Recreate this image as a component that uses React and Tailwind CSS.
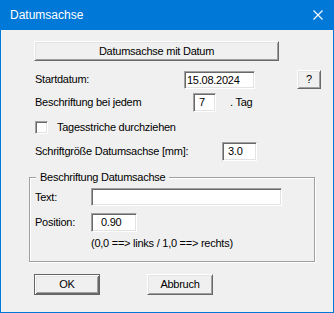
import React from 'react';

const font = { fontFamily: '"Liberation Sans", Arial, sans-serif' };

const Field = ({ w, h = 19, pl = 3, children }) => (
  <div
    className={`bg-white border border-t-[#a0a0a0] border-l-[#a0a0a0] border-b-white border-r-white shadow-[inset_1px_1px_0_#696969,inset_-1px_-1px_0_#e3e3e3] flex items-center text-black shrink-0`}
    style={{ width: w, height: h, paddingLeft: pl }}
  >
    {children}
  </div>
);

const Btn = ({ w, h, def, children }) => (
  <div
    className={`bg-[#f0f0f0] flex items-center justify-center shrink-0 text-black ${
      def
        ? 'border border-[#646464] shadow-[inset_1px_1px_0_#ffffff,inset_-1px_-1px_0_#696969,inset_2px_2px_0_#e3e3e3,inset_-2px_-2px_0_#a0a0a0]'
        : 'border border-t-white border-l-white border-b-[#696969] border-r-[#696969] shadow-[inset_1px_1px_0_#e3e3e3,inset_-1px_-1px_0_#a0a0a0]'
    }`}
    style={{ width: w, height: h }}
  >
    {children}
  </div>
);

const App = () => {
  return (
    <div className="w-[334px] h-[313px] bg-[#0078d7] flex flex-col text-[11px] tracking-[-0.25px]" style={font}>
      <div className="h-[30px] flex items-center justify-between pl-[10px] pr-[11px] shrink-0">
        <span className="text-white text-[12px] tracking-normal">Datumsachse</span>
        <svg width="10" height="10" viewBox="0 0 10 10">
          <path d="M0.5 0.5 L9.5 9.5 M9.5 0.5 L0.5 9.5" stroke="white" strokeWidth="1.1" />
        </svg>
      </div>
      <div className="flex-1 mx-[1px] mb-[1px] bg-[#f0f0f0] flex flex-col leading-[13px]">
        <div className="mt-[11px] ml-[33px]">
          <Btn w={245} h={20}>Datumsachse mit Datum</Btn>
        </div>

        <div className="mt-[9px] ml-[34px] h-[19px] flex items-center">
          <span className="w-[149px] shrink-0">Startdatum:</span>
          <div className="self-start mt-[1px]">
            <Field w={71} h={18} pl={2}>15.08.2024</Field>
          </div>
          <div className="ml-[42px]">
            <Btn w={24} h={19}>?</Btn>
          </div>
        </div>

        <div className="mt-[4px] ml-[34px] h-[19px] flex items-center">
          <span className="w-[158px] shrink-0">Beschriftung bei jedem</span>
          <Field w={23} pl={5}>7</Field>
          <span className="ml-[14px]">. Tag</span>
        </div>

        <div className="mt-[9px] ml-[34px] h-[13px] flex items-center">
          <div className="w-[13px] h-[13px] bg-white border border-t-[#a0a0a0] border-l-[#a0a0a0] border-b-white border-r-white shadow-[inset_1px_1px_0_#696969,inset_-1px_-1px_0_#e3e3e3]" />
          <span className="ml-[9px]">Tagesstriche durchziehen</span>
        </div>

        <div className="mt-[8px] ml-[34px] h-[19px] flex items-center">
          <span className="w-[187px] shrink-0">Schriftgröße Datumsachse [mm]:</span>
          <Field w={35} pl={5}>3.0</Field>
        </div>

        <div className="mt-[16px] ml-[28px] w-[286px] h-[85px] relative border border-[#a0a0a0] shadow-[inset_1px_1px_0_#ffffff,1px_1px_0_#ffffff] flex flex-col">
          <span className="absolute -top-[7px] left-[6px] px-[4px] bg-[#f0f0f0]">Beschriftung Datumsachse</span>
          <div className="mt-[10px] ml-[5px] h-[18px] flex items-center">
            <span className="w-[56px] shrink-0">Text:</span>
            <Field w={191} h={18} />
          </div>
          <div className="mt-[7px] ml-[5px] h-[19px] flex items-center">
            <span className="w-[56px] shrink-0">Position:</span>
            <Field w={46} pl={9}>0.90</Field>
          </div>
          <div className="mt-[5px] ml-[61px]">(0,0 ==&gt; links / 1,0 ==&gt; rechts)</div>
        </div>

        <div className="mt-[12px] ml-[33px] flex">
          <Btn w={66} h={21} def>OK</Btn>
          <div className="ml-[47px]">
            <Btn w={66} h={21}>Abbruch</Btn>
          </div>
        </div>
      </div>
    </div>
  );
};

export default App;
